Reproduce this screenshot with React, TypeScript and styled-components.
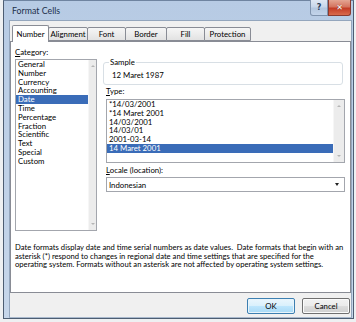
import React from 'react';
import styled, { createGlobalStyle } from 'styled-components';

const FONT_SIZE = '7.8px';

const GlobalStyle = createGlobalStyle`
  body {
    margin: 0;
    background: #eef0f2;
    font-family: Lato, "Open Sans", sans-serif;
  }
`;

const Page = styled.div`
  width: 356px;
  height: 322px;
  padding-left: 3px;
  box-sizing: border-box;
  overflow: hidden;
`;

const Dialog = styled.div`
  width: 351px;
  height: 319px;
  box-sizing: border-box;
  border: 1px solid #4d5d72;
  border-top-color: #6f84a0;
  background: linear-gradient(to bottom, #b7cbe4, #c6d6ea);
  padding: 0 1px 2px 5px;
  display: flex;
  flex-direction: column;
`;

const TitleBar = styled.div`
  height: 19px;
  display: flex;
  align-items: flex-start;
  justify-content: space-between;
`;

const Title = styled.span`
  font-size: 8.8px;
  line-height: 20px;
  color: #1c2f4a;
  margin-left: 3px;
`;

const CaptionButtons = styled.div`
  display: flex;
  margin-top: -1px;
  margin-right: 1px;
`;

const CaptionButton = styled.div<{ $close?: boolean }>`
  width: ${p => (p.$close ? 23 : 18)}px;
  height: 16px;
  box-sizing: border-box;
  border: 1px solid ${p => (p.$close ? '#8a3a2f' : '#7f93ad')};
  border-top: none;
  border-radius: ${p => (p.$close ? '0 0 3px 0' : '0 0 0 3px')};
  background: ${p =>
    p.$close
      ? 'linear-gradient(to bottom, #e4a593 0%, #d4745f 45%, #c43c26 55%, #d86a4c 100%)'
      : 'linear-gradient(to bottom, #dfe8f3 0%, #c8d7ea 45%, #b3c7df 55%, #c3d4ea 100%)'};
  display: flex;
  align-items: center;
  justify-content: center;
  font-family: "DejaVu Sans", sans-serif;
  font-size: 8px;
  font-weight: bold;
  color: ${p => (p.$close ? '#ffffff' : '#2c3e58')};
  text-shadow: ${p => (p.$close ? '0 0 1px #6b1a10' : 'none')};
`;

const Client = styled.div`
  flex: 1;
  background: #f0f0f0;
  border: 1px solid #94a6bd;
  border-bottom-color: #a9b9cd;
  box-sizing: border-box;
  padding: 4px 0 3px 0;
  display: flex;
  flex-direction: column;
`;

const TabStrip = styled.div`
  display: flex;
  align-items: flex-end;
  height: 17px;
  padding-left: 2px;
  margin-bottom: -1px;
  position: relative;
  z-index: 1;
`;

const Tab = styled.div<{ $active?: boolean; $w: number }>`
  width: ${p => p.$w}px;
  height: ${p => (p.$active ? 17 : 14)}px;
  margin-bottom: ${p => (p.$active ? 0 : 1)}px;
  margin-right: -1px;
  box-sizing: border-box;
  border: 1px solid #898c95;
  border-bottom: ${p => (p.$active ? 'none' : '1px solid #898c95')};
  border-radius: 2px 2px 0 0;
  background: ${p =>
    p.$active ? '#ffffff' : 'linear-gradient(to bottom, #f6f6f6, #e2e2e2)'};
  font-size: ${FONT_SIZE};
  line-height: ${p => (p.$active ? 16 : 12)}px;
  text-align: center;
  white-space: nowrap;
  color: #000;
  z-index: ${p => (p.$active ? 2 : 1)};
`;

const Panel = styled.div`
  height: 252px;
  box-sizing: border-box;
  border: 1px solid #898c95;
  background: #ffffff;
  padding: 6px 5px 0 4px;
  display: flex;
  flex-direction: column;
`;

const TopRow = styled.div`
  display: flex;
  gap: 6px;
`;

const CategoryColumn = styled.div`
  width: 82px;
  display: flex;
  flex-direction: column;
`;

const RightColumn = styled.div`
  flex: 1;
  display: flex;
  flex-direction: column;
  padding-top: 10px;
`;

const Label = styled.div<{ $indent?: number; $gap?: number }>`
  font-size: ${FONT_SIZE};
  line-height: 9px;
  color: #000;
  margin-left: ${p => p.$indent ?? 0}px;
  margin-top: ${p => p.$gap ?? 0}px;
`;

const ListBox = styled.div<{ $h: number; $indent?: number; $gap?: number }>`
  height: ${p => p.$h}px;
  margin-top: ${p => p.$gap ?? 2}px;
  margin-left: ${p => p.$indent ?? 0}px;
  box-sizing: border-box;
  border: 1px solid #a3a6ad;
  display: flex;
  background: #fff;
`;

const Items = styled.div`
  flex: 1;
  min-width: 0;
`;

const Item = styled.div<{ $selected?: boolean }>`
  font-size: ${FONT_SIZE};
  line-height: 8.8px;
  height: 8.8px;
  white-space: nowrap;
  padding-left: 2px;
  background: ${p => (p.$selected ? '#3a6cb8' : 'transparent')};
  color: ${p => (p.$selected ? '#ffffff' : '#000')};
`;

const ScrollTrack = styled.div<{ $w: number }>`
  width: ${p => p.$w}px;
  background: #ececec;
  border-left: 1px solid #f6f6f6;
  display: flex;
  flex-direction: column;
  justify-content: space-between;
  align-items: center;
  padding: 5px 0;
  box-sizing: border-box;
`;

const Arrow = styled.div<{ $up?: boolean }>`
  width: 0;
  height: 0;
  border-left: 2px solid transparent;
  border-right: 2px solid transparent;
  ${p =>
    p.$up
      ? 'border-bottom: 2px solid #b5b5b5;'
      : 'border-top: 2px solid #b5b5b5;'}
`;

const SampleGroup = styled.fieldset`
  margin: 0 2px 0 0;
  padding: 4px 0 4px 8px;
  border: 1px solid #d8dfe5;
  border-radius: 3px;
  min-width: 0;
`;

const Legend = styled.legend`
  font-size: ${FONT_SIZE};
  line-height: 9px;
  padding: 0 1px;
  margin-left: -3px;
  color: #000;
`;

const SampleText = styled.div`
  font-size: ${FONT_SIZE};
  line-height: 9px;
  color: #000;
`;

const Combo = styled.div`
  height: 15px;
  margin: 2px 0 0 3px;
  box-sizing: border-box;
  border: 1px solid #a3a6ad;
  display: flex;
  align-items: center;
  justify-content: space-between;
  padding: 0 5px 0 2px;
  font-size: ${FONT_SIZE};
  color: #000;
`;

const ComboArrow = styled.div`
  width: 0;
  height: 0;
  border-left: 2.5px solid transparent;
  border-right: 2.5px solid transparent;
  border-top: 3px solid #222;
`;

const Description = styled.div`
  margin-top: 12px;
  font-size: 7.65px;
  line-height: 8.5px;
  color: #000;
  white-space: pre;
`;

const ButtonRow = styled.div`
  display: flex;
  justify-content: flex-end;
  gap: 7px;
  margin-top: 5px;
  padding-right: 1px;
`;

const Button = styled.div<{ $default?: boolean }>`
  width: 48px;
  height: 16px;
  box-sizing: border-box;
  border: 1px solid ${p => (p.$default ? '#3c7fb1' : '#707070')};
  border-radius: 2px;
  background: ${p =>
    p.$default
      ? 'linear-gradient(to bottom, #eaf6fd 0%, #d9f0fc 50%, #bee6fd 51%, #a7d9f5 100%)'
      : 'linear-gradient(to bottom, #f2f2f2 0%, #ebebeb 50%, #dddddd 51%, #cfcfcf 100%)'};
  box-shadow: ${p => (p.$default ? 'inset 0 0 0 1px #e8f4fb' : 'inset 0 0 0 1px #fbfbfb')};
  font-size: ${FONT_SIZE};
  line-height: 14px;
  text-align: center;
  color: #000;
`;

const categories = [
  'General', 'Number', 'Currency', 'Accounting', 'Date', 'Time',
  'Percentage', 'Fraction', 'Scientific', 'Text', 'Special', 'Custom',
];

const types = [
  '*14/03/2001', '*14 Maret 2001', '14/03/2001', '14/03/01', '2001-03-14', '14 Maret 2001',
];

const tabs: [string, number][] = [
  ['Number', 37], ['Alignment', 40], ['Font', 39], ['Border', 42], ['Fill', 39], ['Protection', 47],
];

const description =
  'Date formats display date and time serial numbers as date values.  Date formats that begin with an\n' +
  'asterisk (*) respond to changes in regional date and time settings that are specified for the\n' +
  'operating system. Formats without an asterisk are not affected by operating system settings.';

export default function App() {
  return (
    <Page>
      <GlobalStyle />
      <Dialog>
        <TitleBar>
          <Title>Format Cells</Title>
          <CaptionButtons>
            <CaptionButton>?</CaptionButton>
            <CaptionButton $close>✕</CaptionButton>
          </CaptionButtons>
        </TitleBar>
        <Client>
          <TabStrip>
            {tabs.map(([name, w], i) => (
              <Tab key={name} $w={w} $active={i === 0}>{name}</Tab>
            ))}
          </TabStrip>
          <Panel>
            <TopRow>
              <CategoryColumn>
                <Label><u>C</u>ategory:</Label>
                <ListBox $h={172}>
                  <Items>
                    {categories.map(c => (
                      <Item key={c} $selected={c === 'Date'}>{c}</Item>
                    ))}
                  </Items>
                  <ScrollTrack $w={8}>
                    <Arrow $up />
                    <Arrow />
                  </ScrollTrack>
                </ListBox>
              </CategoryColumn>
              <RightColumn>
                <SampleGroup>
                  <Legend>Sample</Legend>
                  <SampleText>12 Maret 1987</SampleText>
                </SampleGroup>
                <Label $indent={3} $gap={2}><u>T</u>ype:</Label>
                <ListBox $h={64} $indent={3} $gap={3}>
                  <Items>
                    {types.map((t, i) => (
                      <Item key={t + i} $selected={i === types.length - 1}>{t}</Item>
                    ))}
                  </Items>
                  <ScrollTrack $w={11}>
                    <Arrow $up />
                    <Arrow />
                  </ScrollTrack>
                </ListBox>
                <Label $indent={3} $gap={3}><u>L</u>ocale (location):</Label>
                <Combo>
                  <span>Indonesian</span>
                  <ComboArrow />
                </Combo>
              </RightColumn>
            </TopRow>
            <Description>{description}</Description>
          </Panel>
          <ButtonRow>
            <Button $default>OK</Button>
            <Button>Cancel</Button>
          </ButtonRow>
        </Client>
      </Dialog>
    </Page>
  );
}
